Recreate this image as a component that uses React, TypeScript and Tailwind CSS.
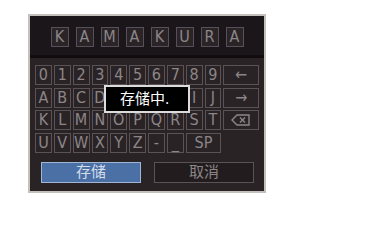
const title = ["K", "A", "M", "A", "K", "U", "R", "A"];

type Key = { label: string; span?: boolean };

const rows: Key[][] = [
  [..."0123456789".split("").map((c) => ({ label: c })), { label: "←", span: true }],
  [..."ABCDEFGHIJ".split("").map((c) => ({ label: c })), { label: "→", span: true }],
  [..."KLMNOPQRST".split("").map((c) => ({ label: c })), { label: "⌫", span: true }],
  [..."UVWXYZ-_".split("").map((c) => ({ label: c })), { label: "SP", span: true }],
];

const BackspaceIcon = () => (
  <svg width="20" height="12" viewBox="0 0 20 12" fill="none" stroke="currentColor" strokeWidth="1.4">
    <path d="M6 1h12v10H6L1 6z" />
    <path d="M9 3.5l5 5M14 3.5l-5 5" />
  </svg>
);

export default function App() {
  return (
    <div className="w-[384px] h-[207px] bg-white pt-[14px] pl-[28px] font-['DejaVu_Sans_Condensed','Liberation_Sans_Narrow','Roboto','Noto_Sans_CJK_SC',sans-serif]">
      <div className="relative w-[238px] h-[179px] border-2 border-[#c4c0bc] bg-[#2a2325] flex flex-col">
        {/* 入力欄 */}
        <div className="h-[39px] bg-[#1b1619] flex justify-center gap-[7px] pt-[11px]">
          {title.map((c, i) => (
            <div
              key={i}
              className="w-[18px] h-[20px] border border-[#57505a] bg-[#2a2427] flex items-center justify-center text-[16px] text-[#8c8689]"
            >
              {c}
            </div>
          ))}
        </div>
        <div className="h-[3px] bg-[#110d0f]" />

        {/* キーボード */}
        <div className="grid grid-cols-12 gap-x-[2px] gap-y-[2.5px] px-[5px] pt-[7px]">
          {rows.map((row, r) =>
            row.map((k, i) => (
              <div
                key={`${r}-${i}`}
                className={`h-[20px] border border-[#5a5254] flex items-center justify-center text-[16px] text-[#8c8689] ${
                  k.span ? "col-span-2" : ""
                }`}
              >
                {k.label === "⌫" ? <BackspaceIcon /> : k.label}
              </div>
            ))
          )}
        </div>

        <div className="flex gap-[13px] pl-[11px] pt-[9px]">
          <button className="w-[100px] h-[21px] border border-[#9fb6d6] bg-[#4b70a6] text-[15px] leading-none text-[#d4dcea]">
            存储
          </button>
          <button className="w-[100px] h-[21px] border border-[#5a5254] bg-[#221c1e] text-[15px] leading-none text-[#8c8689]">
            取消
          </button>
        </div>

        {/* 保存中 */}
        <div className="absolute left-[74px] top-[69px] w-[86px] h-[28px] border-2 border-[#dcdcdc] bg-black flex items-center pl-[14px] text-[15px] text-white">
          存储中.
        </div>
      </div>
    </div>
  );
}
